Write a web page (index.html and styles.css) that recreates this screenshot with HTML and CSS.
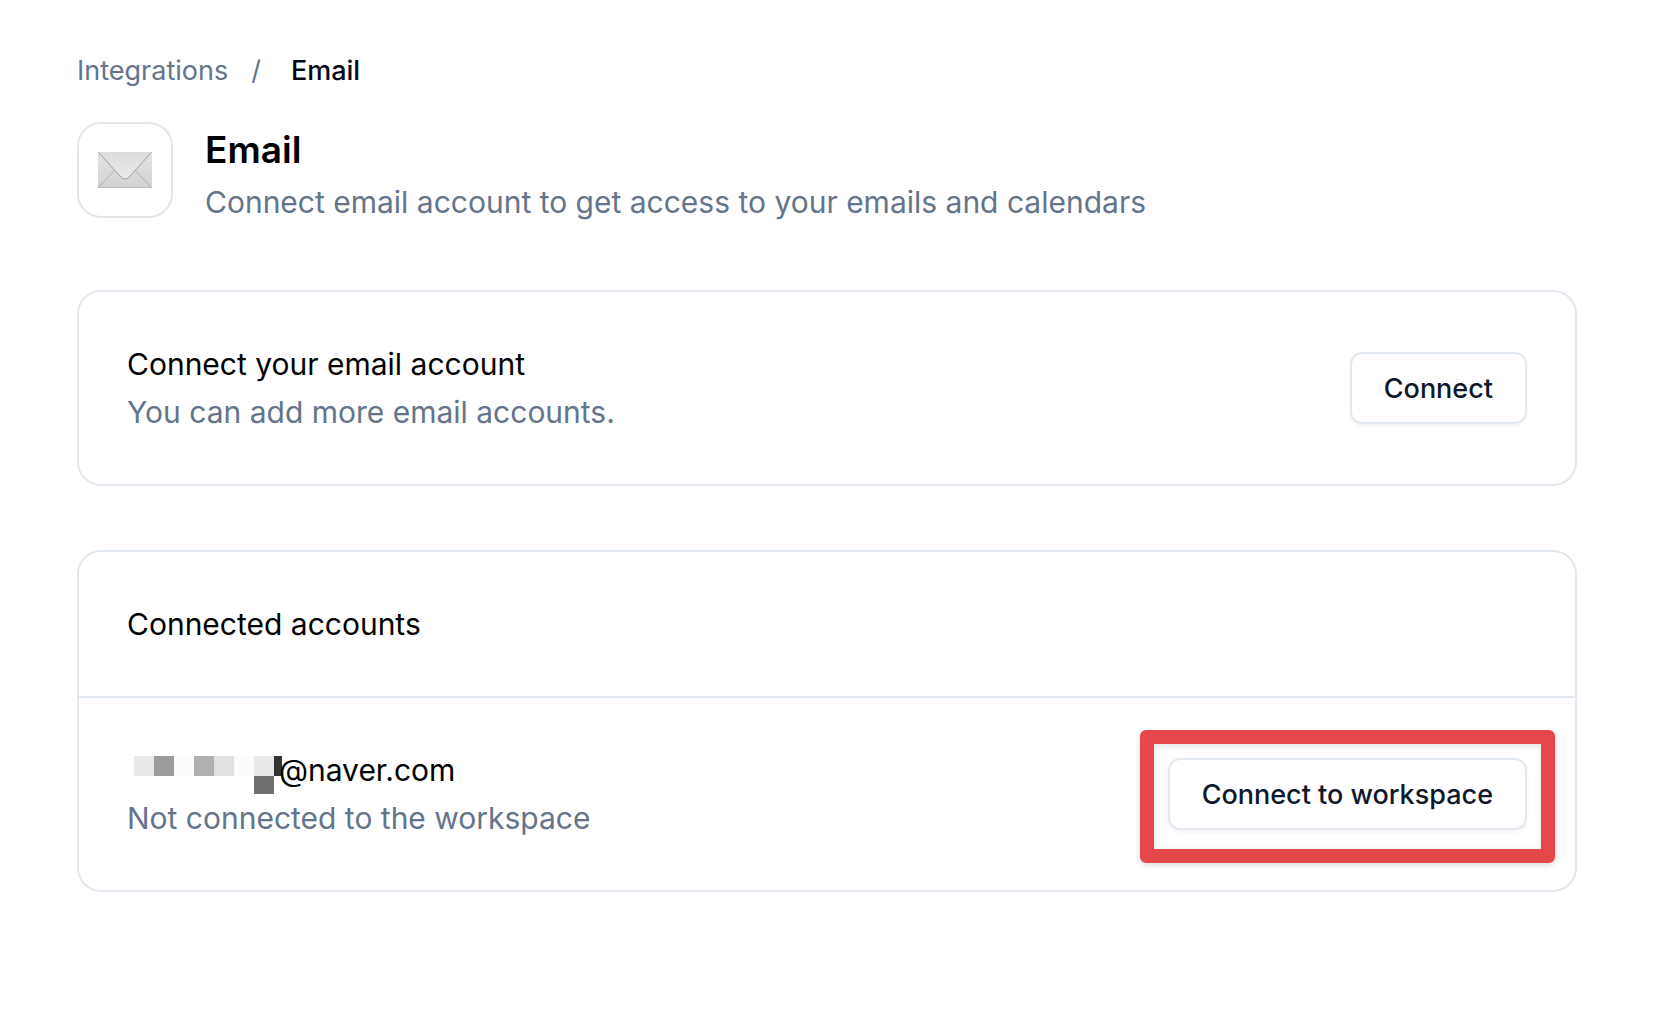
FILE: index.html
```html
<!DOCTYPE html>
<html lang="en">
<head>
<meta charset="utf-8">
<title>Email integration</title>
<link rel="stylesheet" href="styles.css">
</head>
<body>
<main class="page">
  <nav class="breadcrumb" aria-label="Breadcrumb">
    <a class="breadcrumb-link" href="#">Integrations</a>
    <span class="breadcrumb-separator">/</span>
    <span class="breadcrumb-current" aria-current="page">Email</span>
  </nav>

  <header class="intro">
    <div class="intro-icon">
      <svg width="56" height="38" viewBox="0 0 56 38" aria-hidden="true">
        <defs>
          <linearGradient id="paper" x1="0" y1="0" x2="0" y2="1">
            <stop offset="0" stop-color="#e4e4e4"/>
            <stop offset="1" stop-color="#d2d2d2"/>
          </linearGradient>
          <linearGradient id="flap" x1="0" y1="0" x2="0" y2="1">
            <stop offset="0" stop-color="#dcdcdc"/>
            <stop offset="1" stop-color="#eaeaea"/>
          </linearGradient>
        </defs>
        <rect x="1" y="1" width="54" height="36" rx="1" fill="url(#paper)"/>
        <path d="M1.500 36.500 18 19M54.500 36.500 38 19" fill="none" stroke="#b0b0b0"/>
        <path d="M1 1H55L33 25Q28 31 23 25Z" fill="url(#flap)"/>
        <path d="M1.500 1.500 23 25Q28 31 33 25L54.500 1.500" fill="none" stroke="#9b9ea3"/>
        <path d="M1.500 36.500H54.500" stroke="#bdbdbd"/>
      </svg>
    </div>
    <div>
      <h1 class="intro-title">Email</h1>
      <p class="muted">Connect email account to get access to your emails and calendars</p>
    </div>
  </header>

  <section class="card">
    <div class="card-row">
      <div>
        <h2 class="card-title">Connect your email account</h2>
        <p class="muted">You can add more email accounts.</p>
      </div>
      <button class="button" type="button">Connect</button>
    </div>
  </section>

  <section class="card">
    <div class="card-row">
      <h2 class="card-title">Connected accounts</h2>
    </div>
    <div class="card-row">
      <div>
        <p class="account">
          <svg class="account-mask" width="152" height="38" viewBox="0 0 152 38" role="img" aria-label="Hidden name">
            <path fill="#e9e9e9" d="M7 0h20v20H7zM127 0h20v20h-20z"/>
            <path fill="#9c9c9c" d="M27 0h20v20H27z"/>
            <path fill="#fbfbfb" d="M47 0h20v20H47zM107 0h20v20h-20z"/>
            <path fill="#b0b0b0" d="M67 0h20v20H67z"/>
            <path fill="#e1e1e1" d="M87 0h20v20H87z"/>
            <path fill="#6f6f6f" d="M127 20h20v18h-20z"/>
            <path fill="#333333" d="M147 0h8v20h-8z"/>
          </svg>
          <span>@naver.com</span>
        </p>
        <p class="muted">Not connected to the workspace</p>
      </div>
      <div class="highlighted">
        <button class="button" type="button">Connect to workspace</button>
      </div>
    </div>
  </section>
</main>
</body>
</html>
```
FILE: styles.css
```css
* { box-sizing: border-box; }

body {
  margin: 0;
  background: #fff;
  color: #000;
  font: 400 30px/48px Inter, "Liberation Sans", sans-serif;
}

h1, h2, p { margin: 0; }

.page {
  display: flex;
  flex-direction: column;
  gap: 64px;
  padding: 51px 85px 64px 77px;
}

.breadcrumb {
  display: flex;
  gap: 23px;
  margin-bottom: -33px;
  color: #64748b;
  font-size: 27px;
  line-height: 40px;
}

.breadcrumb-link { color: inherit; text-decoration: none; }
.breadcrumb-separator { margin-right: 7px; }
.breadcrumb-current { color: #020817; font-weight: 500; }

.intro {
  display: flex;
  gap: 32px;
}

.intro-icon {
  display: flex;
  flex: none;
  align-items: center;
  justify-content: center;
  width: 96px;
  height: 96px;
  border: 2px solid #e4e4eb;
  border-radius: 24px;
}

.intro-title {
  font-size: 37px;
  font-weight: 600;
  line-height: 56px;
}

.muted { color: #64748b; }

.card {
  border: 2px solid #e2e8f0;
  border-radius: 24px;
}

.card-row {
  display: flex;
  align-items: center;
  justify-content: space-between;
  padding: 48px;
}

.card-row + .card-row { border-top: 2px solid #e2e8f0; }

.card-title { font-size: 30px; font-weight: 400; line-height: 48px; }

.button {
  display: block;
  height: 72px;
  padding: 2px 32px 0;
  border: 2px solid #e2e8f0;
  border-radius: 12px;
  background: #fff;
  box-shadow: 0 2px 4px rgba(0, 0, 0, 0.05);
  color: #0f172a;
  font: 500 27px/40px Inter, "Liberation Sans", sans-serif;
}

.account { display: flex; }
.account-mask { margin-top: 10px; overflow: visible; }

.highlighted { position: relative; }

/* Red marker frame laid over the button */
.highlighted::after {
  position: absolute;
  inset: -28px -28px -33px -28px;
  border: 14px solid #e5484a;
  border-radius: 6px;
  box-shadow: 0 2px 6px rgba(0, 0, 0, 0.15), inset 0 2px 6px rgba(0, 0, 0, 0.12);
  content: "";
  pointer-events: none;
}
```
